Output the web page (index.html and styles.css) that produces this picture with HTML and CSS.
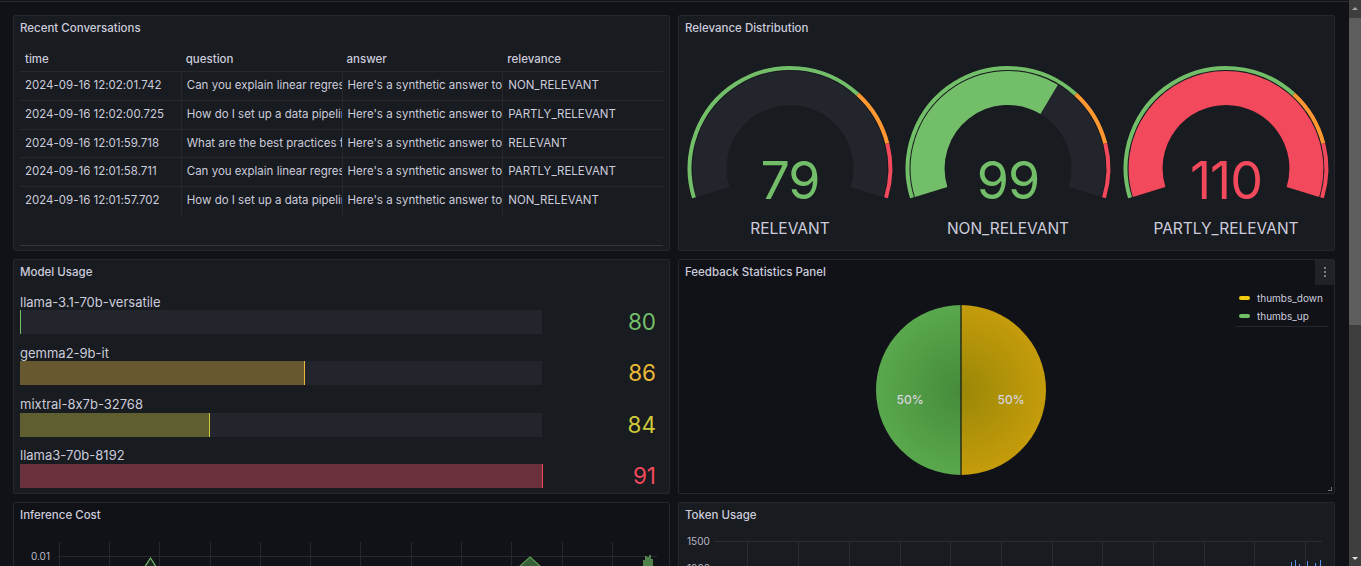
FILE: index.html
```html
<!DOCTYPE html>
<html lang="en">
<head>
<meta charset="utf-8">
<title>LLM Dashboard</title>
<link rel="stylesheet" href="styles.css">
</head>
<body>
<div class="screen">
  <div class="main">
    <div class="topline"></div>
    <main class="dash">
      <section class="panel p-table">
        <div class="ptitle">Recent Conversations</div>
        <div class="tablewrap">
          <div class="trow thead">
            <div class="cell">time</div>
            <div class="cell">question</div>
            <div class="cell">answer</div>
            <div class="cell">relevance</div>
          </div>
          <div class="trow">
            <div class="cell">2024-09-16 12:02:01.742</div>
            <div class="cell">Can you explain linear regression?</div>
            <div class="cell">Here's a synthetic answer to the question</div>
            <div class="cell">NON_RELEVANT</div>
          </div>
          <div class="trow">
            <div class="cell">2024-09-16 12:02:00.725</div>
            <div class="cell">How do I set up a data pipeline?</div>
            <div class="cell">Here's a synthetic answer to the question</div>
            <div class="cell">PARTLY_RELEVANT</div>
          </div>
          <div class="trow">
            <div class="cell">2024-09-16 12:01:59.718</div>
            <div class="cell">What are the best practices for</div>
            <div class="cell">Here's a synthetic answer to the question</div>
            <div class="cell">RELEVANT</div>
          </div>
          <div class="trow">
            <div class="cell">2024-09-16 12:01:58.711</div>
            <div class="cell">Can you explain linear regression?</div>
            <div class="cell">Here's a synthetic answer to the question</div>
            <div class="cell">PARTLY_RELEVANT</div>
          </div>
          <div class="trow last">
            <div class="cell">2024-09-16 12:01:57.702</div>
            <div class="cell">How do I set up a data pipeline?</div>
            <div class="cell">Here's a synthetic answer to the question</div>
            <div class="cell">NON_RELEVANT</div>
          </div>
        </div>
      </section>

      <section class="panel p-gauges">
        <div class="ptitle">Relevance Distribution</div>
        <div class="gauges">
          <div class="gauge">
            <div class="gwrap">
              <svg class="gsvg" width="218" height="140" viewBox="0 0 218 140">
                <path d="M 32.11 131.91 A 80.4 80.4 0 1 1 185.89 131.91" fill="none" stroke="#22252b" stroke-width="34"/>
                <path d="M 12.99 137.76 A 100.4 100.4 0 0 1 176.70 34.25" fill="none" stroke="#73BF69" stroke-width="4"/>
                <path d="M 176.70 34.25 A 100.4 100.4 0 0 1 206.29 83.60" fill="none" stroke="#FF9830" stroke-width="4"/>
                <path d="M 206.29 83.60 A 100.4 100.4 0 0 1 205.01 137.76" fill="none" stroke="#F2495C" stroke-width="4"/>
              </svg>
              <div class="gval green">79</div>
            </div>
            <div class="glabel">RELEVANT</div>
          </div>
          <div class="gauge">
            <div class="gwrap">
              <svg class="gsvg" width="218" height="140" viewBox="0 0 218 140">
                <path d="M 32.11 131.91 A 80.4 80.4 0 1 1 185.89 131.91" fill="none" stroke="#22252b" stroke-width="34"/>
                <path d="M 32.11 131.91 A 80.4 80.4 0 0 1 150.17 39.34" fill="none" stroke="#73BF69" stroke-width="34"/>
                <path d="M 12.99 137.76 A 100.4 100.4 0 0 1 176.70 34.25" fill="none" stroke="#73BF69" stroke-width="4"/>
                <path d="M 176.70 34.25 A 100.4 100.4 0 0 1 206.29 83.60" fill="none" stroke="#FF9830" stroke-width="4"/>
                <path d="M 206.29 83.60 A 100.4 100.4 0 0 1 205.01 137.76" fill="none" stroke="#F2495C" stroke-width="4"/>
              </svg>
              <div class="gval green">99</div>
            </div>
            <div class="glabel">NON_RELEVANT</div>
          </div>
          <div class="gauge">
            <div class="gwrap">
              <svg class="gsvg" width="218" height="140" viewBox="0 0 218 140">
                <path d="M 32.11 131.91 A 80.4 80.4 0 1 1 185.89 131.91" fill="none" stroke="#F2495C" stroke-width="34"/>
                <path d="M 12.99 137.76 A 100.4 100.4 0 0 1 176.70 34.25" fill="none" stroke="#73BF69" stroke-width="4"/>
                <path d="M 176.70 34.25 A 100.4 100.4 0 0 1 206.29 83.60" fill="none" stroke="#FF9830" stroke-width="4"/>
                <path d="M 206.29 83.60 A 100.4 100.4 0 0 1 205.01 137.76" fill="none" stroke="#F2495C" stroke-width="4"/>
              </svg>
              <div class="gval red">110</div>
            </div>
            <div class="glabel">PARTLY_RELEVANT</div>
          </div>
        </div>
      </section>

      <section class="panel p-bars">
        <div class="ptitle">Model Usage</div>
        <div class="bars">
          <div class="brow">
            <div class="blabel">llama-3.1-70b-versatile</div>
            <div class="btrack"><div class="bfill c-green" style="width:0px"></div></div>
            <div class="bval c-green">80</div>
          </div>
          <div class="brow">
            <div class="blabel">gemma2-9b-it</div>
            <div class="btrack"><div class="bfill c-gold" style="width:285px"></div></div>
            <div class="bval c-gold">86</div>
          </div>
          <div class="brow">
            <div class="blabel">mixtral-8x7b-32768</div>
            <div class="btrack"><div class="bfill c-olive" style="width:190px"></div></div>
            <div class="bval c-olive">84</div>
          </div>
          <div class="brow">
            <div class="blabel">llama3-70b-8192</div>
            <div class="btrack"><div class="bfill c-red" style="width:523px"></div></div>
            <div class="bval c-red">91</div>
          </div>
        </div>
      </section>

      <section class="panel p-pie transparent">
        <div class="ptitle">Feedback Statistics Panel</div>
        <button class="pmenu" aria-label="Menu">
          <svg width="4" height="12" viewBox="0 0 4 12"><circle cx="2" cy="2" r="1" fill="#9fa1a8"/><circle cx="2" cy="6" r="1" fill="#9fa1a8"/><circle cx="2" cy="10" r="1" fill="#9fa1a8"/></svg>
        </button>
        <div class="piebody">
          <div class="piearea">
            <div class="piewrap">
              <svg width="172" height="172" viewBox="0 0 172 172">
                <defs>
                  <radialGradient id="gg" cx="86" cy="86" r="86" gradientUnits="userSpaceOnUse">
                    <stop offset="0" stop-color="#468b3a"/>
                    <stop offset="1" stop-color="#5aa84e"/>
                  </radialGradient>
                  <radialGradient id="gy" cx="86" cy="86" r="86" gradientUnits="userSpaceOnUse">
                    <stop offset="0" stop-color="#9a8707"/>
                    <stop offset="1" stop-color="#c59c0b"/>
                  </radialGradient>
                </defs>
                <path d="M 86 1 A 85 85 0 0 0 86 171 Z" fill="url(#gg)"/>
                <path d="M 86 1 A 85 85 0 0 1 86 171 Z" fill="url(#gy)"/>
                <line x1="86" y1="1" x2="86" y2="171" stroke="#111217" stroke-width="1.2"/>
              </svg>
              <span class="plabel pl-left">50%</span>
              <span class="plabel pl-right">50%</span>
            </div>
          </div>
          <div class="legend">
            <div class="litem"><span class="lmark y"></span>thumbs_down</div>
            <div class="litem"><span class="lmark g"></span>thumbs_up</div>
          </div>
        </div>
        <div class="resize"></div>
      </section>

      <section class="panel p-cost transparent">
        <div class="ptitle">Inference Cost</div>
        <svg class="chart" width="655" height="211" viewBox="0 0 655 211">
          <text x="36" y="33.5" text-anchor="end" class="axis">0.01</text>
          <g stroke="#25272c" stroke-width="1">
            <line x1="43" y1="30.5" x2="643" y2="30.5"/>
            <line x1="45.5" y1="16" x2="45.5" y2="211"/>
            <line x1="95.5" y1="16" x2="95.5" y2="211"/>
            <line x1="145.5" y1="16" x2="145.5" y2="211"/>
            <line x1="196.5" y1="16" x2="196.5" y2="211"/>
            <line x1="246.5" y1="16" x2="246.5" y2="211"/>
            <line x1="296.5" y1="16" x2="296.5" y2="211"/>
            <line x1="346.5" y1="16" x2="346.5" y2="211"/>
            <line x1="397.5" y1="16" x2="397.5" y2="211"/>
            <line x1="447.5" y1="16" x2="447.5" y2="211"/>
            <line x1="497.5" y1="16" x2="497.5" y2="211"/>
            <line x1="548.5" y1="16" x2="548.5" y2="211"/>
            <line x1="598.5" y1="16" x2="598.5" y2="211"/>
          </g>
          <path d="M 106 80 L 136.5 32 L 167 80" fill="rgba(115,191,105,0.12)" stroke="#73BF69" stroke-width="1.2"/>
          <path d="M 516 31 L 560 71 L 472 71 Z" fill="#36603a" stroke="#5b9a53" stroke-width="1.2"/>
          <g stroke="#73BF69" stroke-width="1.3">
            <line x1="630" y1="34" x2="630" y2="60"/>
            <line x1="632" y1="30" x2="632" y2="60"/>
            <line x1="634" y1="31" x2="634" y2="60"/>
            <line x1="636" y1="29" x2="636" y2="60"/>
            <line x1="638" y1="33" x2="638" y2="60"/>
          </g>
        </svg>
      </section>

      <section class="panel p-tokens">
        <div class="ptitle">Token Usage</div>
        <svg class="chart" width="655" height="211" viewBox="0 0 655 211">
          <text x="8" y="18.5" class="axis">1500</text>
          <text x="8" y="46" class="axis">1000</text>
          <g stroke="#2a2c31" stroke-width="1">
            <line x1="35" y1="15.5" x2="643" y2="15.5"/>
            <line x1="35" y1="42.5" x2="643" y2="42.5"/>
            <line x1="68.5" y1="15.5" x2="68.5" y2="211"/>
            <line x1="119.5" y1="15.5" x2="119.5" y2="211"/>
            <line x1="170.5" y1="15.5" x2="170.5" y2="211"/>
            <line x1="221.5" y1="15.5" x2="221.5" y2="211"/>
            <line x1="271.5" y1="15.5" x2="271.5" y2="211"/>
            <line x1="322.5" y1="15.5" x2="322.5" y2="211"/>
            <line x1="373.5" y1="15.5" x2="373.5" y2="211"/>
            <line x1="423.5" y1="15.5" x2="423.5" y2="211"/>
            <line x1="474.5" y1="15.5" x2="474.5" y2="211"/>
            <line x1="525.5" y1="15.5" x2="525.5" y2="211"/>
            <line x1="575.5" y1="15.5" x2="575.5" y2="211"/>
            <line x1="626.5" y1="15.5" x2="626.5" y2="211"/>
          </g>
          <g stroke="#5794F2" stroke-width="1">
            <line x1="612.5" y1="36" x2="612.5" y2="60"/>
            <line x1="616.5" y1="34" x2="616.5" y2="60"/>
            <line x1="620.5" y1="38" x2="620.5" y2="60"/>
            <line x1="628.5" y1="35" x2="628.5" y2="60"/>
            <line x1="636.5" y1="37" x2="636.5" y2="60"/>
            <line x1="641.5" y1="34" x2="641.5" y2="60"/>
          </g>
        </svg>
      </section>
    </main>
  </div>
  <div class="scrollbar">
    <div class="sb-btn"><span class="arr up"></span></div>
    <div class="sb-track"><div class="sb-thumb"></div></div>
    <div class="sb-btn"><span class="arr down"></span></div>
  </div>
</div>
</body>
</html>
```
FILE: styles.css
```css
* { box-sizing: border-box; }
html, body {
  margin: 0;
  padding: 0;
  background: #111217;
  height: 566px;
  overflow: hidden;
  font-family: Inter, "Noto Sans", "Liberation Sans", sans-serif;
  font-feature-settings: "calt" 0;
  color: #ccccdc;
}
.screen {
  display: flex;
  height: 566px;
}
.main {
  flex: 1;
  min-width: 0;
  overflow: hidden;
}
.topline {
  height: 2px;
  border-bottom: 1px solid #2a2c31;
}
.dash {
  display: grid;
  grid-template-columns: 657px 657px;
  grid-template-rows: 235.5px 235.5px 235.5px;
  column-gap: 8px;
  row-gap: 8px;
  padding: 13px 0 0 13px;
}
.panel {
  position: relative;
  background: #181b1f;
  border: 1px solid #25272c;
  border-radius: 2px;
  overflow: hidden;
}
.panel.transparent {
  background: #111217;
}
.ptitle {
  height: 24px;
  line-height: 24px;
  padding: 0 6px;
  font-size: 11.5px;
  font-weight: 500;
  color: #ccccdc;
  white-space: nowrap;
}

/* table */
.tablewrap {
  margin: 8px 6px 0 6px;
  height: 198px;
  border-bottom: 1px solid #34363b;
}
.trow {
  display: grid;
  grid-template-columns: repeat(4, 1fr);
  height: 28.75px;
  border-bottom: 1px solid #25272c;
}
.trow.thead {
  height: 24px;
  font-weight: 500;
}
.trow.last { border-bottom: none; }
.cell {
  font-size: 11.5px;
  line-height: 27.75px;
  padding-left: 5px;
  white-space: nowrap;
  overflow: hidden;
  border-left: 1px solid #25272c;
}
.cell:first-child { border-left: none; }
.thead .cell {
  border-left: none;
  line-height: 22px;
}

/* gauges */
.gauges {
  display: flex;
  padding: 20px 0 0 2px;
}
.gauge {
  width: 218px;
  display: flex;
  flex-direction: column;
  align-items: center;
}
.gwrap {
  position: relative;
  width: 218px;
  height: 140px;
}
.gsvg { display: block; }
.gval {
  position: absolute;
  left: 0;
  right: 0;
  top: 95px;
  text-align: center;
  font-size: 52px;
  line-height: 52px;
  font-weight: 400;
  letter-spacing: -1px;
}
.gval.green { color: #73BF69; }
.gval.red { color: #F2495C; }
.glabel {
  margin-top: 18.5px;
  font-size: 15.5px;
  line-height: 20px;
  color: #ccccdc;
}

/* bars */
.bars {
  display: flex;
  flex-direction: column;
  gap: 10.8px;
  padding: 10px 6px 0 6px;
}
.brow {
  display: grid;
  grid-template-columns: 522px 1fr;
  grid-template-rows: 16.5px 24px;
}
.blabel {
  grid-column: 1 / 3;
  font-size: 13px;
  line-height: 16px;
  color: #ccccdc;
}
.btrack {
  background: #22252b;
  height: 24px;
  position: relative;
}
.bfill {
  height: 24px;
  border-right: 1.5px solid;
  max-width: 523px;
}
.bval {
  align-self: center;
  text-align: right;
  padding-right: 7px;
  font-size: 22.5px;
  line-height: 24px;
}
.c-green { color: #73BF69; border-color: #73BF69; }
.c-gold { color: #EAB839; border-color: #EAB839; }
.c-olive { color: #CFC93A; border-color: #CFC93A; }
.c-red { color: #F2495C; border-color: #F2495C; }
.bfill.c-green { background: transparent; }
.bfill.c-gold { background: rgba(234,184,57,0.35); }
.bfill.c-olive { background: rgba(207,201,58,0.35); }
.bfill.c-red { background: rgba(242,73,92,0.35); }

/* pie */
.pmenu {
  position: absolute;
  top: 0;
  right: 0;
  width: 19px;
  height: 25px;
  padding: 0;
  border: none;
  background: #202226;
  display: flex;
  align-items: center;
  justify-content: center;
}
.piebody {
  display: flex;
  height: 211px;
}
.piearea {
  flex: 1;
  display: flex;
  align-items: flex-start;
  justify-content: center;
  padding: 20px 0 0 6px;
}
.piewrap {
  position: relative;
  width: 172px;
  height: 172px;
}
.piewrap svg { display: block; }
.plabel {
  position: absolute;
  top: 89px;
  font-size: 12px;
  line-height: 14px;
  color: #d6d6dc;
  font-weight: 500;
}
.pl-left { left: 22px; }
.pl-right { left: 123px; }
.legend {
  width: 92px;
  margin: 5.5px 6px 0 0;
  align-self: flex-start;
  border-bottom: 1px solid #25272c;
  padding-bottom: 1px;
}
.litem {
  display: flex;
  align-items: center;
  height: 18px;
  font-size: 10px;
  color: #ccccdc;
  white-space: nowrap;
}
.lmark {
  display: inline-block;
  width: 11px;
  height: 4px;
  border-radius: 2px;
  margin: 0 7px 0 3px;
}
.lmark.y { background: #F2CC0C; }
.lmark.g { background: #73BF69; }
.resize {
  position: absolute;
  right: 2px;
  bottom: 2px;
  width: 4px;
  height: 4px;
  border-right: 1px solid #6e7077;
  border-bottom: 1px solid #6e7077;
}

/* charts */
.chart { display: block; margin-top: -1px; }
.axis {
  font-family: Inter, "Noto Sans", sans-serif;
  font-size: 10px;
  fill: #b8b9c4;
}

/* scrollbar */
.scrollbar {
  width: 12px;
  display: flex;
  flex-direction: column;
  background: #3e3e3e;
}
.sb-btn {
  height: 16px;
  display: flex;
  align-items: center;
  justify-content: center;
}
.sb-track {
  flex: 1;
  padding-top: 2px;
}
.sb-thumb {
  height: 307px;
  background: #5d5d5d;
}
.arr {
  width: 0;
  height: 0;
  border-left: 3px solid transparent;
  border-right: 3px solid transparent;
}
.arr.up { border-bottom: 3px solid #a3a3a3; }
.arr.down { border-top: 3px solid #e0e0e0; }
```
